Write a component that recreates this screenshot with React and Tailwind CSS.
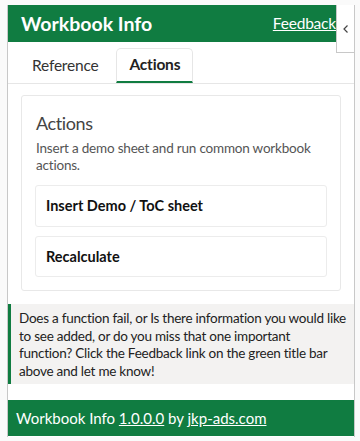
import React from "react";

export default function App() {
  const font = { fontFamily: 'Lato, "Open Sans", sans-serif' };
  return (
    <div className="w-[360px] h-[441px] bg-[#fafafa] pt-[5px] pl-[7px] overflow-hidden" style={font}>
      <div className="relative w-[348px] h-[432px] bg-white border-l border-r border-[#c8c8c8] flex flex-col">
        <div className="mr-[18px] h-[37px] bg-[#107c41] flex items-center justify-between pl-[13px]">
          <span className="text-white font-bold text-[19.5px] leading-none">Workbook Info</span>
          <a className="text-white text-[15.5px] tracking-[-0.2px] underline leading-none">Feedback</a>
        </div>
        <button className="absolute right-0 top-0 w-[18px] h-[48px] bg-white border-l border-b border-[#c8c8c8] flex items-center justify-center">
          <svg width="8" height="10" viewBox="0 0 8 10" fill="none">
            <path d="M5.5 1.5 L2 5 L5.5 8.5" stroke="#444" strokeWidth="1.2" />
          </svg>
        </button>
        <div className="flex items-end gap-[6px] pl-[12px] h-[42px] border-b border-[#e6e6e6]">
          <div className="px-[12px] h-[35px] flex items-center text-[15.5px] tracking-[-0.2px] text-[#333]">Reference</div>
          <div className="px-[12px] h-[35px] flex items-center text-[15.5px] tracking-[-0.2px] font-bold text-[#222] border border-b-0 border-[#e6e6e6] rounded-t-[5px] border-b-2 border-b-[#107c41]">Actions</div>
        </div>
        <div className="mx-[13px] mt-[11px] border border-[#e8e8e8] rounded-[3px] px-[13px] pt-[13px] pb-[13px]">
          <div className="text-[18px] tracking-[-0.4px] leading-[28px] text-[#444] pl-[1px]">Actions</div>
          <div className="text-[13.5px] tracking-[-0.2px] leading-[17px] text-[#555] mt-[3px] pl-[1px]">Insert a demo sheet and run common workbook actions.</div>
          <div className="flex flex-col gap-[9px] mt-[11px]">
            <div className="h-[42px] border border-[#ececec] rounded-[3px] flex items-center px-[10px] text-[14.5px] font-bold text-[#111]">Insert Demo / ToC sheet</div>
            <div className="h-[41px] border border-[#ececec] rounded-[3px] flex items-center px-[10px] text-[14.5px] font-bold text-[#111]">Recalculate</div>
          </div>
        </div>
        <div className="mt-[13px] bg-[#f3f2f1] border-l-[3px] border-[#107c41] pl-[8px] pr-[1px] pt-[6px] pb-[4px] text-[13.5px] tracking-[-0.25px] leading-[17.5px] text-[#222]">
          Does a function fail, or Is there information you would like<br />
          to see added, or do you miss that one important<br />
          function? Click the Feedback link on the green title bar<br />
          above and let me know!
        </div>
        <div className="mt-auto h-[36px] bg-[#107c41] flex items-center pl-[8px] text-white text-[15px] mb-[1px]">
          <span>Workbook Info <a className="underline">1.0.0.0</a> by <a className="underline">jkp-ads.com</a></span>
        </div>
      </div>
    </div>
  );
}
